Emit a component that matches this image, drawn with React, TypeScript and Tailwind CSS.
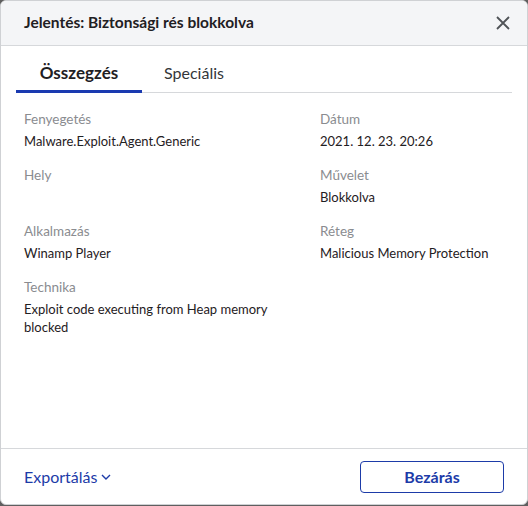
import React, { useState } from "react";

const fields = [
  { label: "Fenyegetés", value: "Malware.Exploit.Agent.Generic" },
  { label: "Dátum", value: "2021. 12. 23. 20:26" },
  { label: "Hely", value: "" },
  { label: "Művelet", value: "Blokkolva" },
  { label: "Alkalmazás", value: "Winamp Player" },
  { label: "Réteg", value: "Malicious Memory Protection" },
  { label: "Technika", value: "Exploit code executing from Heap memory blocked" },
];

export default function App() {
  const [tab, setTab] = useState("summary");

  return (
    <div
      className="w-[528px] h-[506px] bg-[#5f5f5f]"
      style={{ fontFamily: "Lato, 'Open Sans', sans-serif" }}
    >
      <div className="w-full h-[505px] flex flex-col bg-white border border-[#cfd1d4] rounded-[6px] overflow-hidden">
        <div className="h-[45px] shrink-0 flex items-center justify-between pl-[23px] pr-[16px] bg-[#f4f5f7] border-b border-[#d6d8db]">
          <h1 className="text-[15.5px] font-bold text-[#1f2023]">
            Jelentés: Biztonsági rés blokkolva
          </h1>
          <button className="text-[#505357]">
            <svg width="16" height="16" viewBox="0 0 16 16">
              <path
                d="M2 2 L14 14 M14 2 L2 14"
                stroke="currentColor"
                strokeWidth="1.8"
                fill="none"
              />
            </svg>
          </button>
        </div>

        <div className="mx-[15px] mt-[10px] flex border-b border-[#d6d8db]">
          <button
            onClick={() => setTab("summary")}
            className={`w-[126px] h-[37px] -mb-px border-b-[3px] ${
              tab === "summary"
                ? "text-[17px] font-bold text-[#1f2023] border-[#1a3ab0]"
                : "text-[16px] text-[#33363a] border-transparent"
            }`}
          >
            Összegzés
          </button>
          <button
            onClick={() => setTab("advanced")}
            className={`w-[104px] h-[37px] -mb-px border-b-[3px] ${
              tab === "advanced"
                ? "text-[17px] font-bold text-[#1f2023] border-[#1a3ab0]"
                : "text-[16px] text-[#33363a] border-transparent"
            }`}
          >
            Speciális
          </button>
        </div>

        <div className="flex-1 px-[23px] pt-[17px]">
          <div className="grid grid-cols-[272px_1fr] gap-x-[24px]">
            {fields.map((f) => (
              <div key={f.label} className="min-h-[56px] pb-[2px]">
                <div className="text-[13.5px] leading-[18px] text-[#8a8c90]">
                  {f.label}
                </div>
                <div className="mt-[4px] text-[13px] leading-[18px] text-[#1f2023]">
                  {f.value}
                </div>
              </div>
            ))}
          </div>
        </div>

        <div className="h-[56px] shrink-0 flex items-center justify-between pl-[23px] pr-[23px] border-t border-[#d6d8db]">
          <button className="flex items-center gap-[4px] text-[16px] text-[#1d3ba8]">
            Exportálás
            <svg width="10" height="10" viewBox="0 0 10 10">
              <path
                d="M1 3 L5 7 L9 3"
                stroke="currentColor"
                strokeWidth="1.4"
                fill="none"
              />
            </svg>
          </button>
          <button className="w-[144px] h-[32px] rounded-[4px] border border-[#1d3ba8] text-[16px] font-bold text-[#1d3ba8]">
            Bezárás
          </button>
        </div>
      </div>
    </div>
  );
}
